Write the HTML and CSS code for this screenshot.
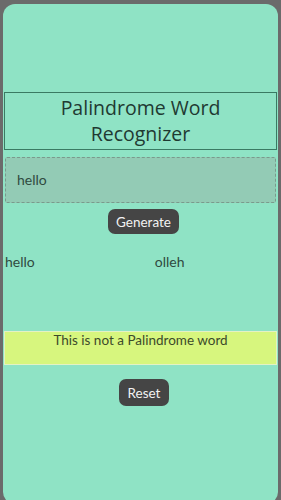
FILE: index.html
```html
<!DOCTYPE html>
<html lang="en">
<head>
<meta charset="UTF-8">
<meta name="viewport" content="width=device-width, initial-scale=1.0">
<title>Palindrome Word Recognizer</title>
<link rel="stylesheet" href="styles.css">
</head>
<body>
<div class="card">
    <h1 class="title">Palindrome Word Recognizer</h1>
    <div class="word-input">hello</div>
    <div class="actions">
        <button class="btn">Generate</button>
    </div>
    <div class="words">
        <span class="word">hello</span>
        <span class="word reversed">olleh</span>
    </div>
    <div class="result">This is not a Palindrome word</div>
    <div class="actions">
        <button class="btn reset">Reset</button>
    </div>
</div>
</body>
</html>
```

FILE: styles.css
```css
* { margin: 0; padding: 0; box-sizing: border-box; }
body {
    background: #6b6b6b;
    font-family: Lato, 'Noto Sans', sans-serif;
    color: #24473c;
    height: 500px;
    overflow: hidden;
    padding: 4px 3px 0 3px;
}
.card {
    background: #8fe3c5;
    border-radius: 12px;
    height: 500px;
    padding: 88px 1px 0 1px;
}
.title {
    border: 1px solid #3a7a63;
    font-family: 'Open Sans', sans-serif;
    font-size: 19.5px;
    font-weight: 400;
    line-height: 26px;
    text-align: center;
    padding: 2px 20px;
    color: #1f3a32;
}
.word-input {
    margin: 7px 1px 0 1px;
    height: 46px;
    background: #93cbb5;
    border: 1px dashed #7a9a8c;
    border-radius: 2px;
    font-size: 14px;
    line-height: 44px;
    padding-left: 11px;
    color: #2f4a40;
}
.actions {
    display: flex;
    justify-content: center;
    margin-top: 6px;
}
.btn {
    background: #454545;
    color: #f2f2f2;
    border: none;
    border-radius: 7px;
    font-family: inherit;
    font-size: 13.5px;
    height: 25px;
    padding: 0 8px;
    margin-left: 6px;
}
.words {
    display: flex;
    margin-top: 18px;
    font-size: 14px;
    line-height: 20px;
    color: #2f4a40;
}
.word { margin-left: 1px; }
.reversed { margin-left: 120px; }
.result {
    margin-top: 59px;
    height: 34px;
    background: #d7f67e;
    border: 1px solid #e4f2c4;
    text-align: center;
    font-size: 13.5px;
    line-height: 17px;
    color: #3c4a2a;
}
.reset {
    margin-top: 8px;
    margin-left: 7px;
    height: 27px;
    padding: 0 9px;
}
```
